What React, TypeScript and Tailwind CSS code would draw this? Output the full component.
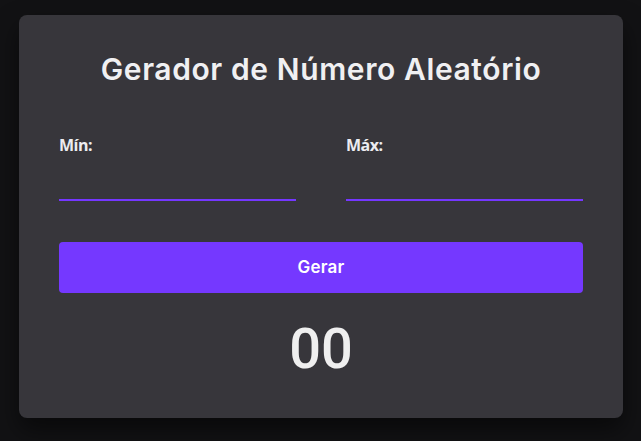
export default function App() {
  return (
    <div className="min-h-[441px] w-full bg-[#121214] pt-[15px] pl-[19px]">
      <div className="flex h-[403px] w-[604px] flex-col rounded-lg bg-[#37363b] px-10 pt-[36px] shadow-[0_12px_24px_rgba(0,0,0,0.5)]">
        <h1 className="text-center font-['Inter',sans-serif] text-[30px] leading-[36px] font-semibold tracking-[0.6px] text-[#f0f0f2]">
          Gerador de Número Aleatório
        </h1>
        <div className="mt-[48px] flex gap-[50px]">
          <label className="flex flex-1 flex-col">
            <span className="font-['Open_Sans',sans-serif] text-[16px] leading-5 font-bold tracking-[-0.5px] text-[#ececf0]">
              Mín:
            </span>
            <input
              type="number"
              className="mt-[12px] h-[34px] border-b-2 border-[#7537ff] bg-transparent font-['Open_Sans',sans-serif] text-base text-white outline-none"
            />
          </label>
          <label className="flex flex-1 flex-col">
            <span className="font-['Open_Sans',sans-serif] text-[16px] leading-5 font-bold tracking-[-0.5px] text-[#ececf0]">
              Máx:
            </span>
            <input
              type="number"
              className="mt-[12px] h-[34px] border-b-2 border-[#7537ff] bg-transparent font-['Open_Sans',sans-serif] text-base text-white outline-none"
            />
          </label>
        </div>
        <button className="mt-[41px] h-[51px] w-full rounded bg-[#7538ff] font-['Inter',sans-serif] text-[17px] font-semibold tracking-[0.2px] text-white">
          Gerar
        </button>
        <p className="mt-[24px] text-center font-['Roboto',sans-serif] text-[56px] leading-[64px] font-medium text-[#efefef]">
          00
        </p>
      </div>
    </div>
  );
}
